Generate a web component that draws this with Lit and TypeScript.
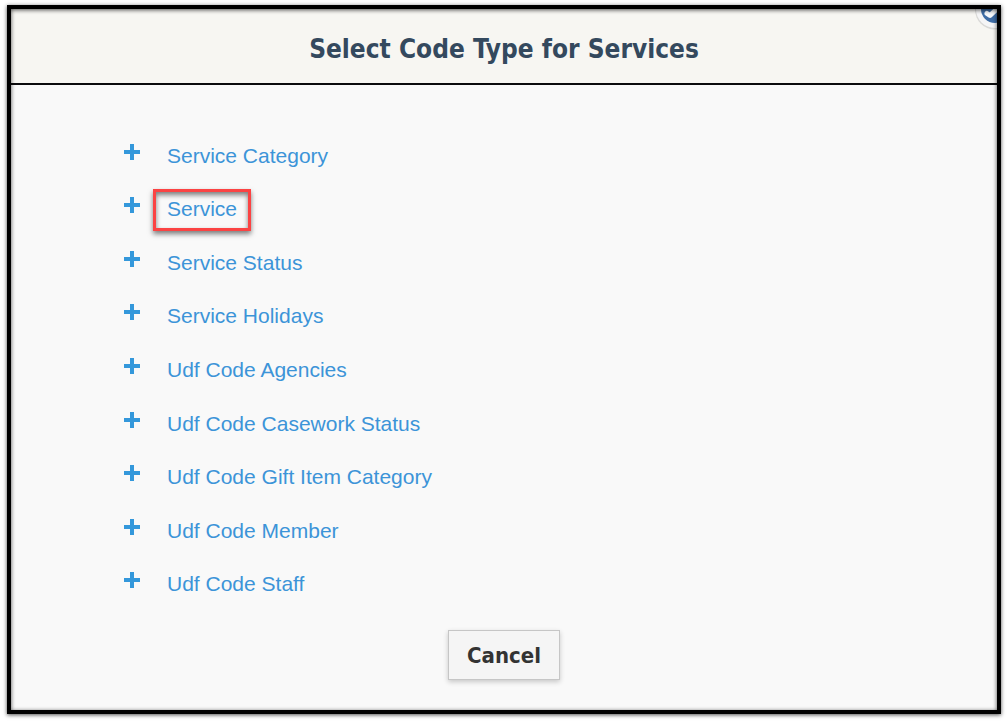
import { LitElement, html, css } from "lit";
import { customElement, property } from "lit/decorators.js";

interface CodeType {
  label: string;
  highlighted?: boolean;
}

@customElement("app-root")
export class AppRoot extends LitElement {
  @property({ attribute: false }) codeTypes: CodeType[] = [
    { label: "Service Category" },
    { label: "Service", highlighted: true },
    { label: "Service Status" },
    { label: "Service Holidays" },
    { label: "Udf Code Agencies" },
    { label: "Udf Code Casework Status" },
    { label: "Udf Code Gift Item Category" },
    { label: "Udf Code Member" },
    { label: "Udf Code Staff" },
  ];

  static styles = css`
    :host {
      display: flex;
      box-sizing: border-box;
      min-height: 100vh;
      padding: 5px 6px 8px 7px;
      background: #fff;
      font-family: "Liberation Sans", Arial, sans-serif;
    }
    .dialog {
      position: relative;
      flex: 1;
      display: flex;
      flex-direction: column;
      overflow: hidden;
      border: 4px solid #000;
      background: #f9f9f9;
      box-shadow: 0 1px 4px rgba(0, 0, 0, 0.7);
    }
    .dialog::after {
      content: "";
      position: absolute;
      inset: 0;
      box-shadow: inset 0 1px 4px rgba(0, 0, 0, 0.7);
      pointer-events: none;
    }
    .header {
      padding: 22px 0 16px;
      border-bottom: 2px solid #0b0b0d;
      background: #f7f6f2;
      text-align: center;
    }
    .title {
      margin: 0;
      font: bold 26px/36px "DejaVu Sans Condensed", Tahoma, "Noto Sans", sans-serif;
      color: #34495e;
    }
    .list {
      flex: 1;
      display: grid;
      grid-auto-rows: 1fr;
      margin: 0;
      padding: 45px 112px 18px;
      list-style: none;
    }
    .item {
      display: flex;
      align-items: center;
    }
    .toggle {
      display: flex;
      padding: 0 0 10px;
      border: 0;
      background: none;
      color: #3498db;
      cursor: pointer;
    }
    .plus {
      width: 18px;
      height: 18px;
    }
    .link {
      margin-left: 12px;
      padding: 5px 11px 7px;
      border: 3px solid transparent;
      font-size: 21px;
      line-height: 24px;
      color: #3c94d8;
      text-decoration: none;
    }
    .highlighted {
      border-color: #fb4343;
      box-shadow: 0 3px 5px rgba(0, 0, 0, 0.5),
        inset 0 3px 5px rgba(0, 0, 0, 0.5);
    }
    .footer {
      display: flex;
      justify-content: center;
      padding-bottom: 30px;
    }
    .cancel {
      padding: 7px 18px 5px;
      border: 1px solid #c6c6c6;
      background: #f5f5f5;
      box-shadow: 0 2px 5px rgba(0, 0, 0, 0.2);
      font: bold 22px/36px "DejaVu Sans Condensed", Tahoma, "Noto Sans", sans-serif;
      color: #333;
      cursor: pointer;
    }
    .badge {
      position: absolute;
      top: -22px;
      right: -20px;
      width: 44px;
      height: 44px;
    }
  `;

  private renderItem(item: CodeType) {
    return html`<li class="item">
      <button class="toggle" type="button" aria-label="Expand ${item.label}">
        <svg class="plus" viewBox="0 0 18 18" aria-hidden="true">
          <path d="M7 1h4v6h6v4h-6v6H7v-6H1V7h6z" fill="currentColor" />
        </svg>
      </button>
      <a class="link ${item.highlighted ? "highlighted" : ""}" href="#">${item.label}</a>
    </li>`;
  }

  render() {
    return html`<main class="dialog">
      <header class="header">
        <h1 class="title">Select Code Type for Services</h1>
      </header>
      <ul class="list">
        ${this.codeTypes.map((item) => this.renderItem(item))}
      </ul>
      <footer class="footer">
        <button class="cancel" type="button">Cancel</button>
      </footer>
      <svg class="badge" viewBox="0 0 44 44" aria-hidden="true">
        <circle cx="22" cy="22.5" r="20" fill="#bbb" opacity=".5" />
        <circle cx="22" cy="22" r="19" fill="#f5f5f6" />
        <circle cx="22" cy="22" r="14" fill="#3e6ca5" />
        <path d="M14 26.500l3 2L26 20" fill="none" stroke="#f5f7fa" stroke-width="5" stroke-linejoin="round" stroke-linecap="round" />
      </svg>
    </main>`;
  }
}
